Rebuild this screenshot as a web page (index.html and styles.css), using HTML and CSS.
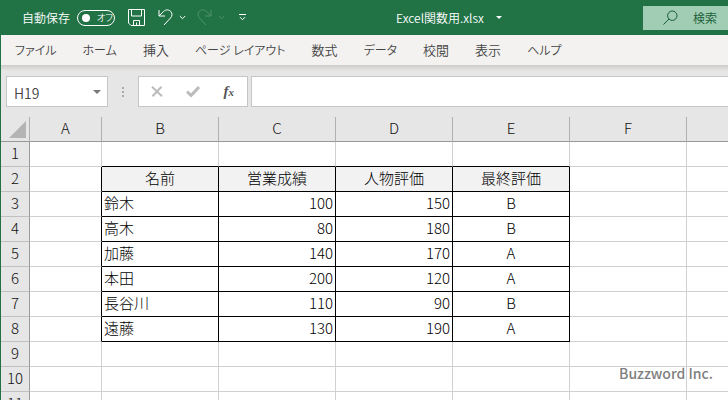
FILE: index.html
```html
<!DOCTYPE html>
<html lang="ja">
<head>
    <meta charset="UTF-8">
    <meta name="viewport" content="width=device-width, initial-scale=1.0">
    <title>Excel関数用.xlsx</title>
    <link rel="stylesheet" href="styles.css">
</head>
<body>

    <header class="titlebar">
        <label class="autosave">
            自動保存
            <span class="switch"><input type="checkbox" class="switch-knob">オフ</span>
        </label>
        <button class="tool save" aria-label="上書き保存">
            <svg width="17" height="17" viewBox="0 0 17 17"><path d="M.5.5h16v16H3L.5 14zM3.500.5v6.500h10V.5M5.500 16.500v-5h6v5M8.500 13.500v3"/></svg>
        </button>
        <button class="tool undo" aria-label="元に戻す">
            <svg width="15" height="17" viewBox="0 0 15 17"><path d="M1 1v6h6M1 7l4.500-4.500C8 .2 11 .6 12.700 2.400c1.800 1.900 1.700 4.700-.2 6.600L6 16"/></svg>
            <svg width="7" height="5" viewBox="0 0 7 5"><path d="M.8 1l2.700 2.700L6.200 1"/></svg>
        </button>
        <button class="tool redo" aria-label="やり直し">
            <svg width="15" height="17" viewBox="0 0 15 17"><path d="M14 1v6H8M14 7L9.500 2.500C7 .2 4 .6 2.300 2.400.5 4.300.6 7.100 2.500 9L9 16"/></svg>
            <svg width="7" height="5" viewBox="0 0 7 5"><path d="M.8 1l2.700 2.700L6.200 1"/></svg>
        </button>
        <button class="tool customize" aria-label="クイック アクセス ツール バーのカスタマイズ">
            <svg width="7" height="7" viewBox="0 0 7 7"><path d="M0 .5h7M1 3.200l2.500 2.500L6 3.200"/></svg>
        </button>
        <button class="filename">Excel関数用.xlsx <span class="caret"></span></button>
        <label class="search">
            <svg width="15" height="15" viewBox="0 0 15 15"><circle cx="9.300" cy="5.700" r="4.700"/><path d="M6 9L.5 14.500"/></svg>
            <input type="text" placeholder="検索" aria-label="検索">
        </label>
    </header>

    <nav class="tabs">
        <a href="#" class="kana">ファイル</a>
        <a href="#" class="kana">ホーム</a>
        <a href="#">挿入</a>
        <a href="#" class="kana">ページ レイアウト</a>
        <a href="#">数式</a>
        <a href="#" class="kana">データ</a>
        <a href="#">校閲</a>
        <a href="#">表示</a>
        <a href="#" class="kana">ヘルプ</a>
    </nav>

    <div class="formula-bar">
        <div class="name-box">
            <input type="text" value="H19" aria-label="名前ボックス">
            <span class="caret"></span>
        </div>
        <svg class="grip" width="2" height="10" viewBox="0 0 2 10"><path d="M0 0h2v2H0zM0 4h2v2H0zM0 8h2v2H0z"/></svg>
        <div class="formula-buttons">
            <button aria-label="キャンセル"><svg width="12" height="11" viewBox="0 0 12 11"><path d="M1 .8l10 9.400M10.500.8L1.500 10.200"/></svg></button>
            <button aria-label="入力"><svg width="14" height="11" viewBox="0 0 14 11"><path class="check" d="M1 5.500L5 9.500 13 1"/></svg></button>
            <button class="fx" aria-label="関数の挿入">f<small>x</small></button>
        </div>
        <input type="text" class="formula" aria-label="数式バー">
    </div>

    <table class="sheet">
        <colgroup>
            <col class="col-head"><col class="col-a"><col><col><col><col><col><col class="col-rest">
        </colgroup>
        <thead>
            <tr><th class="corner"><svg width="17" height="17" viewBox="0 0 17 17"><path d="M17 0v17H0z"/></svg></th><th>A</th><th>B</th><th>C</th><th>D</th><th>E</th><th>F</th><th></th></tr>
        </thead>
        <tbody>
            <tr class="above"><th>1</th><td></td><td></td><td></td><td></td><td></td><td></td><td></td></tr>
            <tr class="data titles"><th>2</th><td></td><td>名前</td><td>営業成績</td><td>人物評価</td><td>最終評価</td><td></td><td></td></tr>
            <tr class="data"><th>3</th><td></td><td>鈴木</td><td>100</td><td>150</td><td>B</td><td></td><td></td></tr>
            <tr class="data"><th>4</th><td></td><td>高木</td><td>80</td><td>180</td><td>B</td><td></td><td></td></tr>
            <tr class="data"><th>5</th><td></td><td>加藤</td><td>140</td><td>170</td><td>A</td><td></td><td></td></tr>
            <tr class="data"><th>6</th><td></td><td>本田</td><td>200</td><td>120</td><td>A</td><td></td><td></td></tr>
            <tr class="data"><th>7</th><td></td><td>長谷川</td><td>110</td><td>90</td><td>B</td><td></td><td></td></tr>
            <tr class="data"><th>8</th><td></td><td>遠藤</td><td>130</td><td>190</td><td>A</td><td></td><td></td></tr>
            <tr><th>9</th><td></td><td></td><td></td><td></td><td></td><td></td><td></td></tr>
            <tr><th>10</th><td></td><td></td><td></td><td></td><td></td><td></td><td></td></tr>
            <tr><th>11</th><td></td><td></td><td></td><td></td><td></td><td></td><td></td></tr>
        </tbody>
    </table>

    <div class="credit">Buzzword Inc.</div>

</body>
</html>
```
FILE: styles.css
```css
* {
    box-sizing: border-box;
}
body {
    font-family: "Noto Sans CJK JP", "Open Sans", sans-serif;
    font-size: 13px;
    font-weight: 350;
    background-color: #e6e6e6;
    border-left: 1px solid #217346;
    margin: 0;
    height: 100vh;
    overflow: hidden;
    position: relative;
}
button, input {
    font: inherit;
    color: inherit;
    background: none;
    border: 0;
    margin: 0;
    padding: 0;
}
svg {
    display: block;
    fill: none;
    stroke: currentColor;
}
.titlebar {
    display: flex;
    align-items: center;
    height: 35px;
    padding-left: 21px;
    background-color: #217346;
    color: #fff;
    font-size: 12px;
}
.autosave {
    display: flex;
    align-items: center;
    gap: 7px;
    white-space: nowrap;
}
.switch {
    display: flex;
    align-items: center;
    gap: 7px;
    width: 38px;
    height: 16px;
    padding-left: 4px;
    border: 1px solid #fff;
    border-radius: 8px;
    font-size: 9px;
    font-feature-settings: "palt";
}
.switch-knob {
    appearance: none;
    width: 8px;
    height: 8px;
    border-radius: 50%;
    background-color: #fff;
}
.tool {
    display: flex;
    align-items: center;
    gap: 6px;
    flex: none;
}
.save {
    margin-left: 13px;
}
.undo {
    margin-left: 13px;
}
.redo {
    margin-left: 11px;
    color: #4f9170;
}
.customize {
    margin-left: 14px;
}
.filename {
    display: flex;
    align-items: center;
    gap: 12px;
    margin-left: 150px;
    white-space: nowrap;
}
.caret {
    border: 3px solid transparent;
    border-top-color: currentColor;
    border-bottom: 0;
}
.search {
    display: flex;
    align-items: center;
    gap: 15px;
    width: 85px;
    height: 24px;
    margin-left: auto;
    padding-left: 20px;
    background-color: #a0cdb3;
    color: #185c37;
}
.search svg {
    flex: none;
}
.search input {
    flex: 1;
    min-width: 0;
}
.search input::placeholder {
    color: #185c37;
    opacity: 1;
}
.tabs {
    display: flex;
    align-items: center;
    gap: 26px;
    height: 30px;
    padding: 0 0 2px 14px;
    background-color: #f3f2f1;
    font-feature-settings: "palt";
}
.tabs a {
    color: #444;
    text-decoration: none;
    white-space: nowrap;
}
.tabs .kana {
    font-size: 12px;
}
.formula-bar {
    display: flex;
    align-items: center;
    height: 52px;
    padding: 11px 0 10px 5px;
    background: linear-gradient(#cecccb, #e6e6e6 6px);
}
.name-box, .formula-buttons, .formula {
    height: 31px;
    background-color: #fff;
    border: 1px solid #c6c6c6;
}
.name-box {
    display: flex;
    align-items: center;
    width: 102px;
    padding: 0 6px 0 7px;
    color: #444;
}
.name-box input {
    flex: 1;
    min-width: 0;
    padding-top: 3px;
    font-size: 14px;
}
.name-box .caret {
    border-width: 4px 4px 0;
    color: #777;
}
.grip {
    margin: 0 14px;
    fill: #aaa;
    stroke: none;
}
.formula-buttons {
    display: flex;
    align-items: center;
    justify-content: space-between;
    width: 110px;
    padding: 0 13px 0 12px;
    color: #bbb;
}
.formula-buttons svg {
    stroke-width: 2;
}
.formula-buttons .check {
    stroke-width: 3;
}
.fx {
    color: #555;
    font: italic bold 15px/20px "Liberation Serif", serif;
}
.fx small {
    font-size: 11px;
}
.formula {
    flex: 1;
    margin-left: 3px;
    border-right: 0;
}
.sheet {
    table-layout: fixed;
    width: 100%;
    border-collapse: separate;
    border-spacing: 0;
    font-size: 15px;
    font-weight: 300;
    line-height: 22px;
}
.sheet col {
    width: 117px;
}
.sheet .col-head {
    width: 29px;
}
.sheet .col-a {
    width: 72px;
}
.sheet .col-rest {
    width: auto;
}
.sheet th {
    height: 25px;
    padding: 0 0 2px;
    font-weight: 300;
    color: #111;
    background-color: #e6e6e6;
    border-right: 1px solid #999;
    border-bottom: 1px solid #c0c0c0;
}
.sheet thead th {
    border-bottom-color: #999;
    border-right-color: #b0b0b0;
}
.sheet .corner svg {
    margin: 3px 0 0 8px;
    fill: #b4b4b4;
    stroke: none;
}
.sheet td {
    height: 25px;
    padding: 0 2px 2px;
    color: #000;
    background-color: #fff;
    border-right: 1px solid #d0d0d0;
    border-bottom: 1px solid #d0d0d0;
}
.sheet tr > :last-child {
    border-right: 0;
}

/* frame round B2:E8 */
.above td:nth-child(n+3):nth-child(-n+6),
.data td:nth-child(n+3):nth-child(-n+6) {
    border-bottom-color: #000;
}
.data td:nth-child(n+2):nth-child(-n+6) {
    border-right-color: #000;
}
.data td:nth-child(4), .data td:nth-child(5) {
    text-align: right;
}
.data td:nth-child(6) {
    text-align: center;
}
.titles td:nth-child(n+3):nth-child(-n+6) {
    text-align: center;
    background-color: #f2f2f2;
}
.credit {
    position: absolute;
    right: 15px;
    bottom: 17px;
    color: #808080;
    font: 500 14px/20px "Noto Sans CJK JP", sans-serif;
}
```
